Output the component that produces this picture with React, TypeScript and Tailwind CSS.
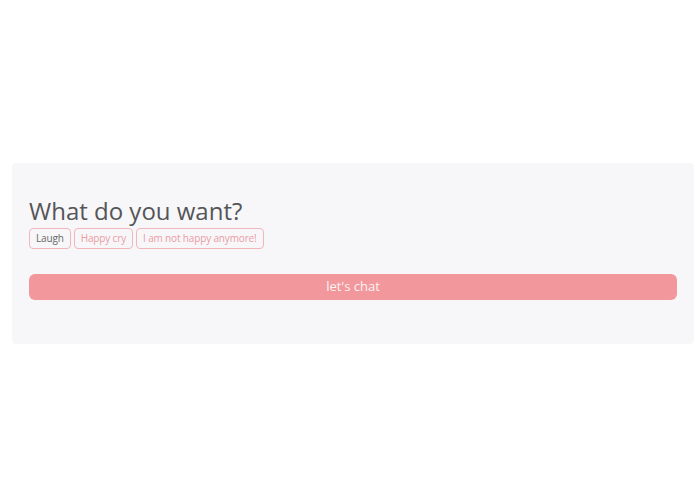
export default function App() {
  const options = ["Laugh", "Happy cry", "I am not happy anymore!"]

  return (
    <div className="min-h-screen bg-white pt-[163px] pl-[12px] font-['Open_Sans',sans-serif]">
      <div className="w-[682px] h-[181px] rounded-[4px] bg-[#f7f7f9] px-[17px] pt-[32px]">
        <h1 className="text-[24px] leading-[32px] text-[#555558] font-normal">What do you want?</h1>
        <div className="flex gap-[3px] mt-[1px]">
          {options.map((o, i) => (
            <span
              key={o}
              className={
                "h-[21px] px-[6px] flex items-center rounded-[4px] border border-[#f1b7bd] text-[10px] tracking-[-0.15px] " +
                (i === 0 ? "text-[#666]" : "text-[#ec9aa3]")
              }
            >
              {o}
            </span>
          ))}
        </div>
        <button className="mt-[25px] w-full h-[26px] rounded-[6px] bg-[#f2979c] text-[#fdf3f3] text-[13px] flex items-center justify-center">
          let's chat
        </button>
      </div>
    </div>
  )
}
